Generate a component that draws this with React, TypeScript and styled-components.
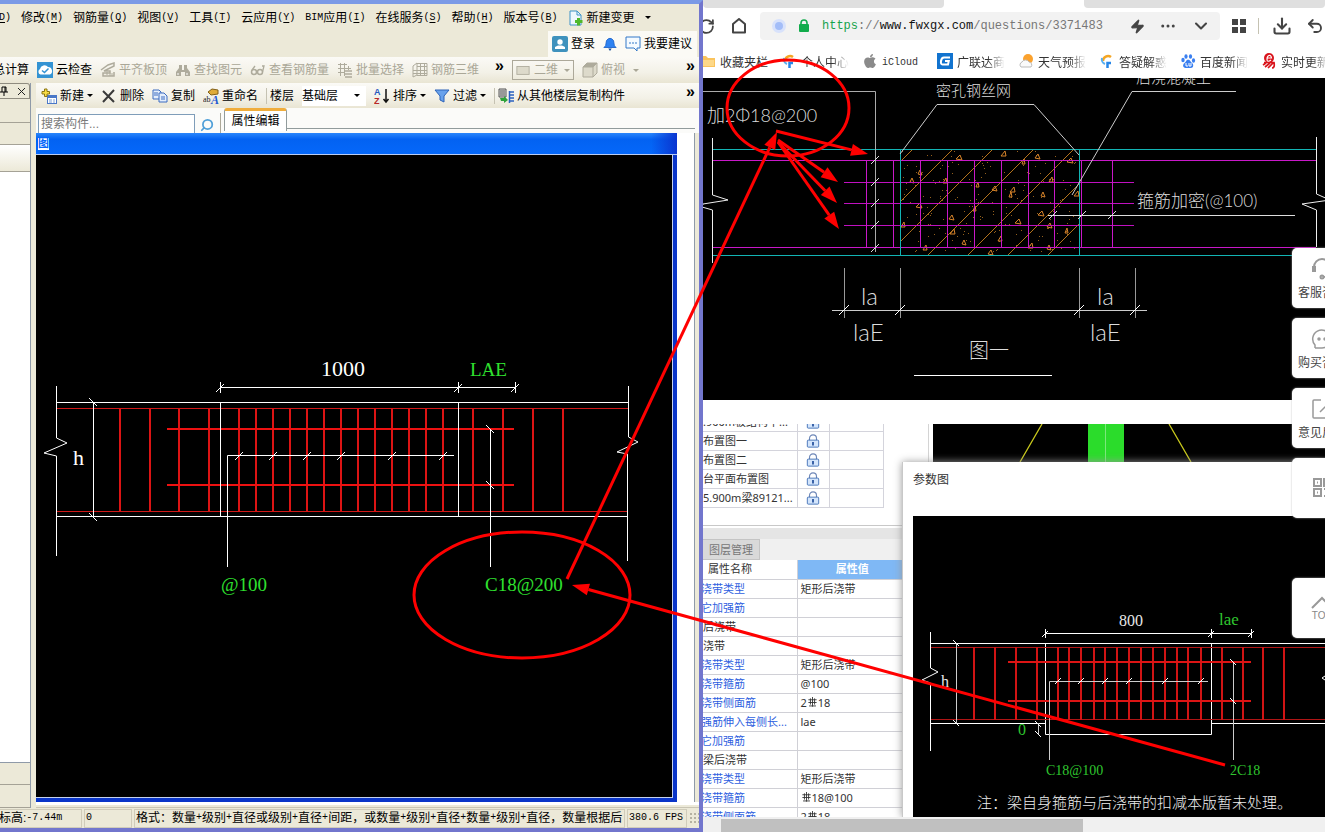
import React from "react";
import styled, { createGlobalStyle } from "styled-components";
import { RotateCw, Zap, MoreHorizontal, ChevronDown, Download, Undo2, Search } from "lucide-react";
import { FaApple } from "react-icons/fa";

const Global = createGlobalStyle`
  * { box-sizing: border-box; }
  body { margin: 0; overflow: hidden; font-family: "Liberation Sans", "Noto Sans CJK SC", sans-serif; font-size: 12px; background: #fff; }
  button { border: 0; background: none; padding: 0; margin: 0; font: inherit; color: inherit; white-space: nowrap; }
  svg { display: block; flex: none; }
`;

/* ---------- shell ---------- */
const Desktop = styled.main`
  position: relative;
  display: grid;
  grid-template-columns: minmax(0, 703fr) minmax(0, 622fr);
  height: 100vh;
  overflow: hidden;
`;
const Annotations = styled.svg`
  position: absolute;
  inset: 0;
  width: 100%;
  height: 100%;
  pointer-events: none;
`;

/* ---------- desktop program ---------- */
const Program = styled.section`
  display: flex;
  flex-direction: column;
  min-width: 0;
  min-height: 0;
  background: #ece9d8;
  border-top: 4px solid #7b9ae6;
  border-right: 4px solid #7276cd;
  border-bottom: 4px solid #7276cd;
  line-height: 16px;
`;
const MenuBar = styled.nav`
  display: flex;
  align-items: center;
  gap: 10px;
  height: 27px;
  margin-left: -1px;
  overflow: hidden;
`;
const MenuItem = styled.button`
  display: flex;
  align-items: center;
`;
const Latin = styled.span`
  font-family: "Liberation Mono", monospace;
  font-size: 10px;
  u { text-underline-offset: 2px; }
`;
const AccountRow = styled.div`
  display: flex;
  justify-content: flex-end;
  height: 26px;
  padding: 0 2px 0 0;
`;
const AccountPanel = styled.div`
  display: flex;
  align-items: center;
  gap: 8px;
  padding: 0 5px 0 4px;
  background: #fbfaf5;
`;
const ToolStrip = styled.div<{ $inset?: boolean }>`
  display: flex;
  align-items: center;
  flex: none;
  gap: 8px;
  height: ${(p) => (p.$inset ? 25 : 26)}px;
  padding-left: ${(p) => (p.$inset ? 5 : 0)}px;
  padding-right: 4px;
  overflow: hidden;
  background: linear-gradient(#fbfaf6, #f3f1e7 60%, #e9e5d3);
`;
const Tool = styled.button<{ $off?: boolean }>`
  display: flex;
  align-items: center;
  gap: 3px;
  flex: none;
  color: ${(p) => (p.$off ? "#aaa797" : "#000")};
`;
const CutLabel = styled.span`
  margin-left: -7px;
`;
const Caret = styled.i<{ $off?: boolean }>`
  border: 3px solid transparent;
  border-top-color: ${(p) => (p.$off ? "#aaa797" : "#000")};
  border-bottom: 0;
  flex: none;
`;
const Divider = styled.i`
  width: 1px;
  height: 16px;
  background: #c5c2b2;
  flex: none;
`;
const More = styled.button<{ $end?: boolean }>`
  font: bold 16px/16px "Liberation Sans", sans-serif;
  margin-left: ${(p) => (p.$end ? "auto" : "8px")};
  padding-bottom: 8px;
`;
const ViewBox = styled.button`
  display: flex;
  align-items: center;
  gap: 4px;
  width: 62px;
  height: 20px;
  padding: 0 3px;
  border: 1px solid #aca899;
  color: #aaa797;
  i { margin-left: auto; }
`;
const FloorBox = styled.div`
  display: flex;
  align-items: center;
  width: 64px;
  height: 20px;
  padding-right: 6px;
  background: #fff;
`;
const FloorPick = styled.select`
  appearance: none;
  flex: 1;
  min-width: 0;
  border: 0;
  padding: 0;
  font: inherit;
  color: #000;
  background: transparent;
`;
const Work = styled.div`
  display: flex;
  flex: 1;
  min-height: 0;
`;
const SidePane = styled.aside`
  display: flex;
  flex-direction: column;
  width: 31px;
  margin-right: 5px;
  flex: none;
  border-right: 1px solid #8f9aa8;
`;
const PinRow = styled.div`
  display: flex;
  align-items: center;
  justify-content: space-between;
  height: 16px;
  border: 1px solid #8f8c80;
  border-left: 0;
  border-radius: 0 3px 0 0;
  padding: 0 3px 0 0;
`;
const SideBand = styled.div<{ $h: number; $light?: boolean }>`
  height: ${(p) => p.$h}px;
  flex: none;
  border-bottom: 1px solid #a5a296;
  background: ${(p) => (p.$light ? "linear-gradient(#fff, #ece9d8)" : "#ece9d8")};
`;
const SideList = styled.div`
  flex: 1;
  background: #fff;
  border-bottom: 1px solid #8f9aa8;
`;
const Center = styled.div`
  display: flex;
  flex-direction: column;
  flex: 1;
  min-width: 0;
`;
const SearchRow = styled.div`
  display: flex;
  align-items: flex-end;
  height: 25px;
  flex: none;
  padding-left: 2px;
  background: #fbfbf9;
`;
const SearchInput = styled.input`
  width: 157px;
  height: 19px;
  border: 1px solid #7f9db9;
  border-bottom: 0;
  padding: 0 2px;
  font: inherit;
  outline: none;
  background: #fff;
  &::placeholder { color: #7a7a7a; opacity: 1; }
`;
const SearchButton = styled.button`
  width: 26px;
  height: 20px;
  padding: 4px 5px 0;
  border-right: 1px solid #aca899;
`;
const Tab = styled.button`
  width: 63px;
  height: 23px;
  margin: 0 0 2px 3px;
  border: 1px solid #919b9c;
  border-top: 3px solid #f0ad3c;
  border-bottom: 0;
  border-radius: 3px 3px 0 0;
  background: #fff;
`;
const TabLine = styled.i`
  flex: 1;
  height: 5px;
  margin-right: 4px;
  border-top: 1px solid #919b9c;
`;
const Stage = styled.div`
  display: flex;
  flex: 1;
  min-height: 0;
  margin-right: 4px;
  padding-right: 17px;
  background: #fff;
  border-right: 1px solid #8f9aa8;
`;
const Child = styled.section`
  display: flex;
  flex-direction: column;
  flex: 1;
  min-width: 0;
  border-right: 4px solid #0a35c8;
  border-bottom: 4px solid #0a35c8;
  background: #000;
`;
const ChildTitle = styled.header`
  display: flex;
  align-items: center;
  height: 22px;
  flex: none;
  margin-right: -4px;
  padding-left: 2px;
  border-bottom: 1px solid #b9cdf5;
  background: linear-gradient(90deg, transparent 96%, #0a35d0), linear-gradient(#2a86fb, #0362f2 30%, #0568fa);
  span { width: 11px; height: 12px; color: #0568fa; background: #fff; font-size: 11px; line-height: 11px; font-weight: bold; }
`;
const Canvas = styled.svg`
  flex: 1;
  width: 100%;
  min-height: 0;
  background: #000;
`;
const ChildCanvas = styled(Canvas)`
  border-right: 1px solid #c5d2ee;
  border-bottom: 1px solid #c5d2ee;
`;
const Underline = styled.div`
  height: 6px;
  flex: none;
  border-top: 3px solid #fff;
  border-bottom: 1px solid #c9c5b4;
`;
const StatusBar = styled.footer`
  display: flex;
  align-items: center;
  height: 20px;
  flex: none;
  gap: 2px;
  margin-left: -3px;
  overflow: hidden;
`;
const StatusCell = styled.div<{ $w?: number }>`
  display: flex;
  align-items: center;
  height: 19px;
  overflow: hidden;
  white-space: nowrap;
  padding-left: 1px;
  border: 1px solid #d0ccba;
  ${(p) => (p.$w ? `width: ${p.$w}px; flex: none;` : "flex: 1; min-width: 0;")}
`;
const Grip = styled.i`
  width: 10px;
  height: 12px;
  flex: none;
  background: radial-gradient(#b5b2a2 1px, transparent 1px) 0 0 / 4px 4px;
`;

/* ---------- browser ---------- */
const Browser = styled.section`
  position: relative;
  display: flex;
  flex-direction: column;
  min-width: 0;
  min-height: 0;
  overflow: hidden;
  background: #fff;
`;
const TabStrip = styled.div`
  display: flex;
  justify-content: space-between;
  height: 8px;
  flex: none;
  i { width: 241px; background: #dfdfdf; border-radius: 0 0 4px 4px; }
`;
const AddressRow = styled.div`
  display: flex;
  align-items: center;
  height: 36px;
  flex: none;
  padding: 1px 0;
  color: #444;
`;
const NavButton = styled.button<{ $w: number; $shift?: boolean }>`
  display: flex;
  justify-content: center;
  align-items: center;
  width: ${(p) => p.$w}px;
  flex: none;
  margin-left: ${(p) => (p.$shift ? -8 : 0)}px;
`;
const AddressBar = styled.div`
  display: flex;
  align-items: center;
  flex: 1;
  min-width: 0;
  height: 28px;
  padding: 0 8px 0 12px;
  gap: 12px;
  border-radius: 4px;
  background: #f2f2f2;
`;
const Halo = styled.i`
  width: 14px;
  height: 14px;
  border-radius: 50%;
  border: 3px solid #d8e2fb;
  background: #a3bdf8;
  flex: none;
`;
const Url = styled.span`
  flex: 1;
  min-width: 0;
  overflow: hidden;
  white-space: nowrap;
  font: 12px/20px "Liberation Mono", monospace;
  color: #777;
  b { font-weight: normal; color: #111; }
  em { font-style: normal; color: #16a34e; }
`;
const Bookmarks = styled.nav`
  display: flex;
  align-items: center;
  gap: 13px;
  height: 34px;
  flex: none;
  margin-left: -3px;
  overflow: hidden;
`;
const Bookmark = styled.a<{ $w?: number; $fade?: boolean }>`
  display: flex;
  align-items: center;
  gap: 4px;
  flex: none;
  color: #333;
  text-decoration: none;
  > span {
    width: ${(p) => p.$w ?? 48}px;
    white-space: nowrap;
    mask-image: ${(p) => (p.$fade ? "linear-gradient(90deg, #000 65%, transparent)" : "none")};
  }
`;
const FigureOne = styled.svg`
  width: 100%;
  flex: 322 0 0;
  min-height: 0;
  background: #000;
`;
const Shot = styled.div`
  display: flex;
  flex: 393 0 0;
  min-height: 0;
  margin-top: 24px;
  overflow: hidden;
  font-family: "Noto Sans", "Noto Sans CJK SC", sans-serif;
  font-size: 11px;
  line-height: 14px;
  color: #333;
`;
const Props = styled.div`
  display: flex;
  flex-direction: column;
  width: 199px;
  flex: none;
  overflow: hidden;
`;
const Sheets = styled.table`
  width: 181px;
  flex: none;
  margin-top: -12px;
  border-collapse: collapse;
  table-layout: fixed;
  td { height: 19px; padding: 0; border: 1px solid #d4d4dc; border-left: 0; white-space: nowrap; overflow: hidden; }
  td:nth-child(1) { width: 94px; }
  td:nth-child(2) { width: 32px; }
  svg { margin: 0 auto; }
`;
const PropTabs = styled.div`
  height: 35px;
  flex: none;
  margin-top: 17px;
  border-top: 1px solid #c8c8c8;
  padding-top: 13px;
  background: linear-gradient(#fff 2px, #e5e5e5 2px, #e5e5e5 13px, #f0f0f0 13px);
  button { width: 57px; height: 21px; color: #777; background: #d9d9d9; border: 1px solid #c4c4c4; border-left: 0; }
`;
const PropTable = styled.table`
  width: 199px;
  flex: none;
  border-collapse: collapse;
  table-layout: fixed;
  th, td { height: 19px; padding: 0; border-bottom: 1px solid #d0d0d6; text-align: left; font-weight: normal; white-space: nowrap; overflow: hidden; }
  th:first-child { width: 94px; border-right: 1px solid #d0d0d6; }
  td { padding-left: 3px; }
  thead th { padding-left: 5px; }
  thead th:last-child { background: #7fb8f5; color: #fff; text-align: center; font-weight: bold; }
`;
const PropName = styled.th<{ $link?: boolean }>`
  color: ${(p) => (p.$link ? "#2f5fe0" : "#333")};
  text-indent: ${(p) => (p.$link ? -2 : 0)}px;
`;
const Value = styled.span`
  display: flex;
  align-items: center;
`;
const ShotRight = styled.div`
  display: flex;
  flex-direction: column;
  flex: 1;
  min-width: 0;
`;
const Strip = styled.div`
  height: 38px;
  flex: none;
  margin-left: 26px;
  padding-left: 4px;
  border-left: 1px solid #d4d4d4;
  svg { width: 100%; height: 38px; background: #000; }
`;
const Dialog = styled.section`
  position: relative;
  display: flex;
  flex-direction: column;
  flex: 1;
  min-height: 0;
  padding-left: 10px;
  border-left: 1px solid #c8c8c8;
  box-shadow: 0 0 8px #999;
  background: #fff;
  header { height: 54px; flex: none; padding-top: 11px; font-size: 12px; }
`;
const ScrollTrack = styled.div`
  height: 15px;
  flex: none;
  padding: 2px 0 0 18px;
  background: #f0f0f0;
  i { display: block; width: 60%; height: 13px; background: #c0c0c0; }
`;
const Floaters = styled.aside`
  position: absolute;
  top: 248px;
  right: -27px;
  display: flex;
  flex-direction: column;
  gap: 10px;
`;
const Floater = styled.button<{ $apart?: boolean }>`
  display: flex;
  flex-direction: column;
  align-items: center;
  justify-content: center;
  gap: 2px;
  width: 60px;
  height: 60px;
  margin-top: ${(p) => (p.$apart ? 50 : 0)}px;
  border-radius: 5px;
  background: #fff;
  box-shadow: 0 0 2px #bbb;
  color: #444;
  small { font-size: 10px; line-height: 10px; color: #888; }
`;

/* ---------- drawing helpers ---------- */
type Pt = [number, number];
const V = ({ xs, a, b, c, w = 1 }: { xs: number[]; a: number; b: number; c: string; w?: number }) => (
  <path d={xs.map((x) => `M${x + (w % 2) / 2} ${a}V${b}`).join("")} stroke={c} strokeWidth={w} fill="none" />
);
const H = ({ ys, a, b, c, w = 1 }: { ys: number[]; a: number; b: number; c: string; w?: number }) => (
  <path d={ys.map((y) => `M${a} ${y + (w % 2) / 2}H${b}`).join("")} stroke={c} strokeWidth={w} fill="none" />
);
const Slashes = ({ pts, r = 4, c = "#fff", back }: { pts: Pt[]; r?: number; c?: string; back?: boolean }) => (
  <path d={pts.map(([x, y]) => (back ? `M${x - r} ${y - r}L${x + r} ${y + r}` : `M${x - r} ${y + r}L${x + r} ${y - r}`)).join("")} stroke={c} fill="none" />
);
const serif = '"Liberation Serif", serif';
const thin = 'Lato, "Noto Sans CJK SC", sans-serif';

const BeamLeft = () => (
  <ChildCanvas viewBox="36 155 636 642" preserveAspectRatio="xMinYMin meet" role="img" aria-label="后浇带配筋图">
    <H ys={[402, 516]} a={56} b={628} c="#fff" />
    <H ys={[408, 511]} a={56} b={628} c="#d01818" />
    <V xs={[120, 150, 179, 209, 239, 256, 273, 290, 307, 324, 341, 358, 375, 392, 409, 426, 443, 473, 503, 533, 563]} a={408} b={512} c="#dc1414" w={2} />
    <H ys={[429, 485]} a={167} b={514} c="#ee1111" w={2} />
    <V xs={[220, 458]} a={402} b={516} c="#fff" />
    <V xs={[93]} a={402} b={516} c="#fff" />
    <Slashes back pts={[[93, 402], [93, 517], [490, 429], [490, 485]]} />
    <H ys={[387]} a={220} b={516} c="#fff" />
    <V xs={[220, 458, 515]} a={382} b={393} c="#fff" />
    <Slashes pts={[[220, 388], [458, 388], [515, 388], [239, 456], [273, 456], [307, 456], [341, 456], [392, 456], [443, 456]]} />
    <path d="M454 455.500H227.500V567M490.500 429V567" stroke="#fff" fill="none" />
    <path d="M56.500 386V438L67 443L44 453L56.500 456V556" stroke="#fff" fill="none" />
    <path d="M628.500 386V437L638 442L617 452L627.500 454V561" stroke="#fff" fill="none" />
    <g fontFamily={serif} fontSize="19" fill="#2fe02f">
      <text x="470" y="376">LAE</text>
      <text x="221" y="591">@100</text>
      <text x="485" y="591">C18@200</text>
    </g>
    <g fontFamily={serif} fontSize="22" fill="#fff">
      <text x="321" y="376">1000</text>
      <text x="73" y="465">h</text>
    </g>
  </ChildCanvas>
);

const BeamRight = () => (
  <Canvas viewBox="913 516 412 301" preserveAspectRatio="xMinYMin slice" role="img" aria-label="参数图">
    <path d="M930 643.500H1325M930 723.500H1045M1211 723.500H1325M1045.500 643V734.500H1211.500V643" stroke="#fff" fill="none" />
    <H ys={[647, 719]} a={930} b={1325} c="#b01515" />
    <V xs={[974, 995, 1016, 1037, 1058, 1069, 1081, 1094, 1105, 1117, 1129, 1141, 1153, 1165, 1177, 1188, 1201, 1222, 1243, 1263, 1284]} a={647} b={720} c="#d01414" w={2} />
    <H ys={[662, 701]} a={1008} b={1251} c="#dc1414" w={2} />
    <H ys={[633]} a={1045} b={1251} c="#fff" />
    <V xs={[1045, 1211, 1251]} a={629} b={638} c="#fff" />
    <V xs={[956]} a={643} b={723} c="#ccc" />
    <V xs={[1038]} a={723} b={735} c="#ccc" />
    <path d="M1208 681.500H1049.500V760M1233.500 662V760" stroke="#ccc" fill="none" />
    <Slashes r={3} pts={[[1045, 634], [1211, 634], [1251, 634], [1058, 681], [1081, 681], [1105, 681], [1129, 681], [1165, 681], [1201, 681]]} />
    <Slashes r={3} back pts={[[956, 643], [956, 723], [1233, 662], [1233, 701], [1038, 724], [1038, 734]]} />
    <path d="M930.500 632V668L938 672L922 680L930.500 683V751M1325 676L1322 678L1325 680" stroke="#fff" fill="none" />
    <g fontFamily={serif} fill="#2fc52f" fontSize="14">
      <text x="1219" y="625" fontSize="17">lae</text>
      <text x="1018" y="735" fontSize="16">0</text>
      <text x="1046" y="775">C18@100</text>
      <text x="1230" y="775">2C18</text>
    </g>
    <g fontFamily={serif} fill="#e8e8e8" fontSize="16">
      <text x="1119" y="626">800</text>
      <text x="941" y="687">h</text>
    </g>
    <text x="977" y="808" fontSize="15" fill="#eee" fontFamily='"Noto Sans CJK SC", sans-serif' fontWeight="300">注：梁自身箍筋与后浇带的扣减本版暂未处理。</text>
  </Canvas>
);

const specks: Pt[] = Array.from({ length: 190 }, (_, i) => [902 + ((i * 73 + (i * i) % 31) % 175), 151 + ((i * 47 + (i * i) % 17) % 102)]);
const stones: Pt[] = [[920, 172], [945, 181], [958, 157], [978, 185], [994, 188], [1003, 154], [912, 180], [903, 225], [918, 205], [975, 209], [951, 217], [952, 232], [964, 242], [1000, 239], [1017, 221], [1024, 162], [1037, 156], [1012, 190], [1043, 194], [1051, 180], [1069, 160], [1067, 231], [1049, 225], [1030, 246], [1049, 247], [925, 248], [1040, 213], [1011, 195], [990, 252], [1076, 194]];

const Figure = () => (
  <FigureOne viewBox="703 78 622 322" preserveAspectRatio="xMinYMin slice" role="img" aria-label="图一">
    <path d={[1062, 1102, 1142, 1183, 1223, 1263, 1303].map((s) => {
      const x0 = Math.max(900, s - 255);
      const x1 = Math.min(1079, s - 149);
      return `M${x0} ${s - x0}L${x1} ${s - x1}`;
    }).join("")} stroke="#b5741c" />
    <path d={specks.map(([x, y]) => `M${x} ${y + 0.5}h1`).join("")} stroke="#94601c" />
    <path d={stones.map(([x, y], i) => `M${x - 2} ${y + 2}l${2 + (i % 3)} ${-4 - (i % 2)}l${2 - (i % 2)} 5z`).join("")} stroke="#d8842a" fill="none" />
    <H ys={[149, 255]} a={713} b={1316} c="#12b4b4" />
    <H ys={[160, 247]} a={713} b={1316} c="#c818c8" />
    <H ys={[182, 203, 225]} a={844} b={1134} c="#c010c0" />
    <V xs={[866, 893, 920, 947, 974, 1001, 1028, 1054, 1081, 1112]} a={160} b={247} c="#c818c8" />
    <V xs={[900, 1079]} a={149} b={255} c="#12b4b4" />
    <path d="M703 91.500H875.500V252" stroke="#aaa" fill="none" />
    <path d="M900 154L937 104.500H1034L1079 155M1236 91.500H1132L1072 195" stroke="#ccc" fill="none" />
    <Slashes c="#ddd" pts={[[875, 160], [875, 182], [875, 203], [875, 225], [875, 248], [1053, 215], [1082, 215], [1112, 215]]} />
    <H ys={[215]} a={1048} b={1295} c="#ddd" />
    <path d="M712.500 138V195L728 200L703 204L702 207L712.500 210V263M1316.500 137V194L1330 200L1302 204L1316.500 210V247" stroke="#eee" fill="none" />
    <V xs={[844, 900, 1079, 1135]} a={268} b={318} c="#999" />
    <H ys={[310]} a={832} b={1147} c="#ccc" />
    <Slashes r={5} pts={[[844, 310], [900, 310], [1079, 310], [1135, 310]]} />
    <H ys={[375]} a={914} b={1052} c="#fff" />
    <g fill="#ddd" fontFamily={thin} fontWeight="300">
      <text x="707" y="122" fontSize="18">加2Φ18@200</text>
      <text x="936" y="96" fontSize="15">密孔钢丝网</text>
      <text x="1136" y="83" fontSize="15">后浇混凝土</text>
      <text x="1137" y="207" fontSize="17">箍筋加密(@100)</text>
      <text x="861" y="305" fontSize="24">la</text>
      <text x="853" y="341" fontSize="24">laE</text>
      <text x="1097" y="305" fontSize="24">la</text>
      <text x="1090" y="341" fontSize="24">laE</text>
      <text x="969" y="358" fontSize="20">图一</text>
    </g>
  </FigureOne>
);

const arrow = ([x0, y0]: Pt, [x1, y1]: Pt) => {
  const a = Math.atan2(y1 - y0, x1 - x0);
  const bx = x1 - 17 * Math.cos(a);
  const by = y1 - 17 * Math.sin(a);
  const dx = 6 * Math.sin(a);
  const dy = 6 * Math.cos(a);
  return (
    <g key={`${x0}-${x1}-${y1}`}>
      <path d={`M${x0} ${y0}L${bx} ${by}`} stroke="#f00" strokeWidth="3" />
      <path d={`M${x1} ${y1}L${bx - dx} ${by + dy}L${bx + dx} ${by - dy}Z`} fill="#f00" />
    </g>
  );
};

/* ---------- small icons ---------- */
const Ico = ({ children, s = 16 }: { children: React.ReactNode; s?: number }) => (
  <svg width={s} height={s} viewBox="0 0 16 16" fill="none" aria-hidden="true">{children}</svg>
);
const G = "#aeab9c";
const CloudCheck = () => <Ico><rect width="16" height="16" fill="#3493d3" /><path d="M3.500 12.500A3 3 0 0 1 3 7A4.500 4.500 0 0 1 11 5A4 4 0 0 1 13 12.500Z" fill="#fff" /><path d="M5 8.500L7.500 10.500L11.500 6.500" stroke="#3493d3" strokeWidth="1.500" /></Ico>;
const Slab = () => <Ico><path d="M1 8L8 3L14 1V4L8 7L4 9H10V11H3V14H14V10" stroke={G} strokeWidth="1.500" /><path d="M7 13V10M10 14V11M12 14V11" stroke={G} /></Ico>;
const Binocs = () => <Ico><path d="M4 3H7V8H9V3H12V6L15 10V14H10V10H6V14H1V10L4 6Z" fill={G} /><path d="M3 11V13M12 11V13" stroke="#fff" /></Ico>;
const Glasses = () => <Ico><circle cx="4" cy="10" r="2.500" stroke={G} strokeWidth="1.500" /><circle cx="10" cy="10" r="2.500" stroke={G} strokeWidth="1.500" /><path d="M2 8L5 4M12.500 10L14 4H12" stroke={G} strokeWidth="1.300" /></Ico>;
const Batch = () => <Ico><path d="M1 2.500H10M1 6.500H14M1 10.500H7M3.500 1V14M7.500 1V14M11.500 4V8" stroke={G} /><path d="M8 9H15M8 12H15M8 15H15" stroke={G} strokeWidth="1.500" /></Ico>;
const Mesh = () => <Ico><path d="M1 4L5 1V13L1 15ZM5 1.500H15V13.500H5M8.500 1V13M12.500 1V13M1 8.500H15M1 11.500H15M5 4.500H15" stroke={G} /></Ico>;
const Cube = () => <Ico><path d="M1 5L5 1H15V11L11 15H1Z" fill="#dddacb" stroke={G} /><path d="M1 5H11V15M11 5L15 1" stroke={G} /><path d="M1 5L5 1H15L11 5Z" fill={G} /></Ico>;
const NewIco = () => <Ico><rect x="6.500" y="7.500" width="9" height="8" fill="#fff" stroke="#4a78c8" /><path d="M7 9H15" stroke="#4a78c8" strokeWidth="2" /><path d="M8 12H11M12 12H14M8 14H11M12 14H14" stroke="#7aa0d8" /><path d="M3.500 1H6V3.500H8.500V6H6V8.500H3.500V6H1V3.500H3.500Z" fill="#f8dc46" stroke="#8a7412" /></Ico>;
const Cross = () => <Ico><path d="M2 3L13 14M13 2L2 14" stroke="#3a3a3a" strokeWidth="2" /></Ico>;
const CopyIco = () => <Ico><path d="M1 2H7L9 4V11H1Z" fill="#e4eefc" stroke="#3d6cc0" /><path d="M7 5H12L15 8V14H7Z" fill="#e4eefc" stroke="#3d6cc0" /><path d="M2 5H6M2 7H6M9 9H13M9 11H13" stroke="#3d6cc0" /></Ico>;
const Rename = () => <Ico><path d="M5 4L9 1L15 2V6L8 7Z" fill="#dfab38" stroke="#826018" /><text x="0" y="14" fontSize="8" fontFamily="Liberation Serif" fill="#222">ab</text><text x="8" y="16" fontSize="12" fontWeight="bold" fontStyle="italic" fontFamily="Liberation Serif" fill="#2058d0">A</text></Ico>;
const SortIco = () => <Ico><text x="0" y="7" fontSize="9" fontWeight="bold" fontFamily="Liberation Sans" fill="#2858c0">A</text><text x="0" y="16" fontSize="9" fontWeight="bold" fontFamily="Liberation Sans" fill="#b82828">Z</text><path d="M12 1V14M9.500 11L12 14L14.500 11" stroke="#111" strokeWidth="1.500" /></Ico>;
const Funnel = () => <Ico><path d="M1 2H15L10 8V14L6 12V8Z" fill="#69a2ec" stroke="#2c62b8" /></Ico>;
const FromFloor = () => <Ico><path d="M1 1H8V9H1Z" fill="#ddd" stroke="#555" /><path d="M2 3H7M2 5H7M2 7H7" stroke="#555" /><path d="M2 10L6 10V8L10 12L6 15V13H3Z" fill="#2ea23a" /><path d="M11.500 3V15M11 4H16M11 7H16M11 10H16M11 13H16" stroke="#2b62c0" strokeWidth="1.500" /></Ico>;
const NewDoc = () => <Ico><path d="M2 1H9L13 5V15H2Z" fill="#eef7fd" stroke="#3f93c8" /><path d="M9 1V5H13" stroke="#3f93c8" /><path d="M9 8H12V10H14.500V13H12V15.500H9V13H7V10H9Z" fill="#4fb82c" /></Ico>;
const UserIco = () => <Ico><rect width="16" height="16" rx="2" fill="#3f92bd" /><circle cx="8" cy="6" r="2.700" fill="#fff" /><path d="M3 13V11L6 9.500H10L13 11V13Z" fill="#fff" /></Ico>;
const BellIco = () => <Ico s={14}><path d="M1 12L3 10L4 4Q8 -1 12 4L13 10L15 12Z" fill="#2d82f2" stroke="#1d62c8" /><path d="M6 13H10L8 16Z" fill="#174b9a" /></Ico>;
const TalkIco = () => <Ico><path d="M1 1H15V12H12V15L9 12H1Z" fill="#f4faff" stroke="#3378c8" /><path d="M4 7H6M7 7H9M10 7H12" stroke="#3378c8" /></Ico>;
const FolderIco = () => <Ico><path d="M0 3H6L8 5H15V14H0Z" fill="#fac35c" /><path d="M1 7H14V13H1Z" fill="#fdd888" /></Ico>;
const SwirlIco = () => <Ico><path d="M4 8A5 5 0 0 1 12 4" stroke="#f5a623" strokeWidth="2.500" /><path d="M3 5A5 5 0 0 0 6 11" stroke="#5ab0f0" strokeWidth="2" /><path d="M12 10H8.500V15" stroke="#2686e8" strokeWidth="2.500" /></Ico>;
const GIco = () => <Ico><rect width="16" height="16" fill="#1173cf" /><path d="M13 4.500H7Q4.500 4.500 4 8T5.500 11.500H11L11.800 8H8" stroke="#fff" strokeWidth="2" /></Ico>;
const WeatherIco = () => <Ico><circle cx="10" cy="6" r="5" fill="#fba22e" /><path d="M3 14A3 3 0 0 1 4 9A4 4 0 0 1 11 9A3 3 0 0 1 13 14Z" fill="#fafafa" stroke="#bbb" /></Ico>;
const PawIco = () => <Ico><g fill="#3a7ff0"><ellipse cx="3" cy="7" rx="1.700" ry="2.200" /><ellipse cx="6" cy="3.500" rx="1.600" ry="2.300" /><ellipse cx="10.500" cy="3.500" rx="1.600" ry="2.300" /><ellipse cx="13.500" cy="7.500" rx="1.600" ry="2.200" /><path d="M8 6.500Q10 6.500 11 9L13 11Q14 15 10.500 15H5.500Q2 14 3.500 11L5.500 9Q6.500 6.500 8 6.500Z" /></g><path d="M6 10V13H8M9 10V13H11V10" stroke="#fff" /></Ico>;
const YiIco = () => <Ico><circle cx="8" cy="5" r="5" fill="#d9141c" /><path d="M5.500 5H10.500Q10 2 8 2.500T6 6.500T10 7" stroke="#fff" strokeWidth="1.200" /><path d="M3 9.500H13Q14 15 11 15M9 10L4 14M12 10L7 15M5 10L2 12" stroke="#d9141c" strokeWidth="1.700" /></Ico>;
const Padlock = () => <Ico s={14}><path d="M4 7V5A4 4 0 0 1 12 5V7" stroke="#6f88b8" strokeWidth="1.300" /><rect x="1.500" y="7" width="13" height="8" rx="1" fill="#d3e5fc" stroke="#3c6cb4" /><path d="M8 9V13" stroke="#234f9c" strokeWidth="2" /></Ico>;
const Rebar = () => <Ico s={11}><path d="M8 0V14M3 13H13" stroke="#333" strokeWidth="1.300" /><path d="M2 4H14M2 8H14M5 2V11M11 2V11" stroke="#333" strokeWidth="1.300" /></Ico>;
const Grid4 = () => <Ico><path d="M1 1H7V7H1ZM9 1H15V7H9ZM1 9H7V15H1ZM9 9H15V15H9Z" fill="#444" /></Ico>;

const menus: [string, string][] = [["修改", "M"], ["钢筋量", "Q"], ["视图", "V"], ["工具", "T"], ["云应用", "Y"], ["BIM应用", "I"], ["在线服务", "S"], ["帮助", "H"], ["版本号", "B"]];
const greyTools: [string, React.ReactNode][] = [["平齐板顶", <Slab />], ["查找图元", <Binocs />], ["查看钢筋量", <Glasses />], ["批量选择", <Batch />], ["钢筋三维", <Mesh />]];
const bookmarks: [string, React.ReactNode, boolean, number?][] = [
  ["收藏夹栏", <FolderIco />, false], ["个人中心", <SwirlIco />, true], ["iCloud", <FaApple size={16} color="#8a8a8a" />, false, 42], ["广联达商", <GIco />, true],
  ["天气预报", <WeatherIco />, true], ["答疑解惑", <SwirlIco />, true], ["百度新闻", <PawIco />, true], ["实时更新", <YiIco />, true],
];
const hint = ["格式：数量", "级别", "直径或级别", "直径", "间距，或数量", "级别", "直径", "数量", "级别", "直径，数量根据后"];
const sheets = [".900m板结构平...", "布置图一", "布置图二", "台平面布置图", "5.900m梁89121..."];
const R = <Rebar />;
const props: [string, boolean, React.ReactNode][] = [
  ["浇带类型", true, "矩形后浇带"], ["它加强筋", true, ""], ["后浇带", false, ""], ["浇带", false, ""], ["浇带类型", true, "矩形后浇带"],
  ["浇带箍筋", true, "@100"], ["浇带侧面筋", true, <Value>2{R}18</Value>], ["强筋伸入每侧长...", true, "lae"], ["它加强筋", true, ""],
  ["梁后浇带", false, ""], ["浇带类型", true, "矩形后浇带"], ["浇带箍筋", true, <Value>{R}18@100</Value>], ["浇带侧面筋", true, <Value>2{R}18</Value>],
];

export default function App() {
  return (
    <>
      <Global />
      <Desktop>
        <Program>
          <MenuBar>
            <MenuItem><Latin><u>D</u>)</Latin></MenuItem>
            {menus.map(([name, key]) => (
              <MenuItem key={key}>
                {name.startsWith("BIM") ? <><Latin>BIM</Latin>{name.slice(3)}</> : name}
                <Latin>(<u>{key}</u>)</Latin>
              </MenuItem>
            ))}
            <Tool><NewDoc />新建变更</Tool>
            <Caret />
          </MenuBar>
          <AccountRow>
            <AccountPanel>
              <Tool><UserIco />登录</Tool>
              <Tool aria-label="通知"><BellIco /></Tool>
              <Tool><TalkIco />我要建议</Tool>
            </AccountPanel>
          </AccountRow>
          <ToolStrip>
            <Tool><CutLabel>总计算</CutLabel></Tool>
            <Tool><CloudCheck />云检查</Tool>
            {greyTools.map(([name, icon]) => <Tool key={name} $off>{icon}{name}</Tool>)}
            <More>»</More>
            <ViewBox><Ico s={14}><rect x="1" y="4" width="14" height="9" fill="#dddacb" stroke={G} /></Ico>二维<Caret $off /></ViewBox>
            <Tool $off><Cube />俯视</Tool>
            <Caret $off />
            <More $end>»</More>
          </ToolStrip>
          <Work>
            <SidePane>
              <PinRow>
                <svg width="10" height="10" viewBox="0 0 10 10" fill="none"><path d="M0 6H8M2 6V1H6V6M5 1V6M4 6V10" stroke="#000" /></svg>
                <svg width="9" height="9" viewBox="0 0 9 9"><path d="M1 1L8 8M8 1L1 8" stroke="#222" /></svg>
              </PinRow>
              <SideBand $h={24} />
              <SideBand $h={22} />
              <SideBand $h={27} $light />
              <SideList />
              <SideBand $h={22} />
              <SideBand $h={23} />
            </SidePane>
            <Center>
              <ToolStrip $inset>
                <Tool><NewIco />新建<Caret /></Tool>
                <Tool><Cross />删除</Tool>
                <Tool><CopyIco />复制</Tool>
                <Tool><Rename />重命名</Tool>
                <Tool as="label" htmlFor="floor"><Divider />楼层</Tool>
                <FloorBox>
                  <FloorPick id="floor" defaultValue="base"><option value="base">基础层</option></FloorPick>
                  <Caret />
                </FloorBox>
                <Tool><SortIco />排序<Caret /></Tool>
                <Tool><Funnel />过滤<Caret /></Tool>
                <Tool><Divider /><FromFloor />从其他楼层复制构件</Tool>
                <More $end>»</More>
              </ToolStrip>
              <SearchRow>
                <SearchInput aria-label="搜索构件" placeholder="搜索构件..." />
                <SearchButton aria-label="搜索"><Search size={14} color="#4f9fd8" strokeWidth={3} transform="scale(-1 1)" /></SearchButton>
                <Tab>属性编辑</Tab>
                <TabLine />
              </SearchRow>
              <Stage>
                <Child>
                  <ChildTitle><span>图</span></ChildTitle>
                  <BeamLeft />
                </Child>
              </Stage>
              <Underline />
            </Center>
          </Work>
          <StatusBar>
            <StatusCell $w={85}><span>标高:</span><Latin>-7.44m</Latin></StatusCell>
            <StatusCell $w={48}><Latin>0</Latin></StatusCell>
            <StatusCell>{hint.map((part, i) => <React.Fragment key={i}>{i > 0 && <Latin>+</Latin>}{part}</React.Fragment>)}</StatusCell>
            <StatusCell $w={60}><Latin>380.6 FPS</Latin></StatusCell>
            <Grip />
          </StatusBar>
        </Program>

        <Browser>
          <TabStrip><i /><i /></TabStrip>
          <AddressRow>
            <NavButton $w={22} $shift aria-label="刷新"><RotateCw size={17} strokeWidth={2.5} /></NavButton>
            <NavButton $w={43} aria-label="主页">
              <svg width="16" height="16" viewBox="0 0 16 16" fill="none"><path d="M2 6L8 1L14 6V14.500H2Z" stroke="#444" strokeWidth="2" strokeLinejoin="round" /></svg>
            </NavButton>
            <AddressBar>
              <Halo />
              <svg width="12" height="14" viewBox="0 0 12 14" fill="none"><path d="M3 6V4A3 3 0 0 1 9 4V6" stroke="#12ac4c" strokeWidth="1.600" /><rect x="1" y="5" width="10" height="8" rx="1" fill="#12ac4c" /></svg>
              <Url><em>https</em>://<b>www.fwxgx.com</b>/questions/3371483</Url>
              <NavButton $w={18} aria-label="加速"><Zap size={15} fill="#444" /></NavButton>
              <NavButton $w={20} aria-label="更多"><MoreHorizontal size={18} /></NavButton>
              <NavButton $w={22} aria-label="展开"><ChevronDown size={20} strokeWidth={2.5} /></NavButton>
            </AddressBar>
            <NavButton $w={38} aria-label="应用"><Grid4 /></NavButton>
            <Divider />
            <NavButton $w={46} aria-label="下载"><Download size={20} strokeWidth={2.5} /></NavButton>
            <NavButton $w={20} aria-label="撤销"><Undo2 size={18} strokeWidth={2.5} /></NavButton>
          </AddressRow>
          <Bookmarks>
            {bookmarks.map(([name, icon, fade, w]) => (
              <Bookmark key={name} href="#" $fade={fade} $w={w}>{icon}<span>{w ? <Latin>{name}</Latin> : name}</span></Bookmark>
            ))}
          </Bookmarks>
          <Figure />
          <Shot>
            <Props>
              <Sheets>
                <tbody>{sheets.map((s) => <tr key={s}><td>{s}</td><td><Padlock /></td><td /></tr>)}</tbody>
              </Sheets>
              <PropTabs><button>图层管理</button></PropTabs>
              <PropTable>
                <thead><tr><th>属性名称</th><th>属性值</th></tr></thead>
                <tbody>{props.map(([name, link, value], i) => <tr key={i}><PropName $link={link}>{name}</PropName><td>{value}</td></tr>)}</tbody>
              </PropTable>
            </Props>
            <ShotRight>
              <Strip>
                <svg viewBox="933 424 392 38" preserveAspectRatio="xMinYMin slice">
                  <rect x="1088" y="424" width="36" height="38" fill="#2bdc2b" />
                  <path d="M1105.500 424V462" stroke="#7be87b" />
                  <path d="M1042 424L1020 462M1169 424L1191 462" stroke="#c8c81c" strokeWidth="1.300" />
                </svg>
              </Strip>
              <Dialog>
                <header>参数图</header>
                <BeamRight />
              </Dialog>
            </ShotRight>
          </Shot>
          <ScrollTrack><i /></ScrollTrack>
          <Floaters>
            <Floater>
              <svg width="22" height="24" viewBox="0 0 22 24" fill="none" stroke="#999" strokeWidth="2"><path d="M3 12V10A8 8 0 0 1 19 10V12M19 15Q18 20 12 20" /><path d="M3 9V15M19 9V15" strokeWidth="4" /><circle cx="11" cy="20" r="1.500" /></svg>
              客服咨询
            </Floater>
            <Floater>
              <svg width="22" height="24" viewBox="0 0 22 24" fill="none" stroke="#999" strokeWidth="1.500"><path d="M4 21H11A9 9 0 1 0 4 18V21" /><circle cx="8" cy="12" r="1" fill="#999" /><circle cx="14" cy="12" r="1" fill="#999" /></svg>
              购买咨询
            </Floater>
            <Floater>
              <svg width="22" height="24" viewBox="0 0 22 24" fill="none" stroke="#999" strokeWidth="1.500"><path d="M10 3H3Q2 3 2 4V20Q2 21 3 21H19V11M9 15L20 4" /></svg>
              意见反馈
            </Floater>
            <Floater aria-label="二维码">
              <svg width="18" height="20" viewBox="0 0 18 20" fill="none" stroke="#999" strokeWidth="2"><path d="M1 1H8V8H1ZM11 1H17V8H11ZM1 11H8V18H1ZM11 11H14V15H17V18H11" /><path d="M4 4.500H5M4 14.500H5" /></svg>
            </Floater>
            <Floater $apart>
              <svg width="24" height="14" viewBox="0 0 24 14" fill="none" stroke="#999" strokeWidth="2"><path d="M2 13L12 3L22 13" /></svg>
              <small>TOP</small>
            </Floater>
          </Floaters>
        </Browser>

        <Annotations viewBox="0 0 1325 832" preserveAspectRatio="none" aria-hidden="true">
          <g fill="none" stroke="#f00" strokeWidth="3">
            <ellipse cx="788" cy="108" rx="61" ry="48" />
            <ellipse cx="522" cy="595" rx="108" ry="63" />
          </g>
          {arrow([567, 579], [777, 132])}
          {arrow([1225, 765], [572, 585])}
          {arrow([776, 131], [868, 154])}
          {arrow([778, 140], [838, 182])}
          {arrow([778, 142], [837, 203])}
          {arrow([778, 142], [839, 229])}
        </Annotations>
      </Desktop>
    </>
  );
}
